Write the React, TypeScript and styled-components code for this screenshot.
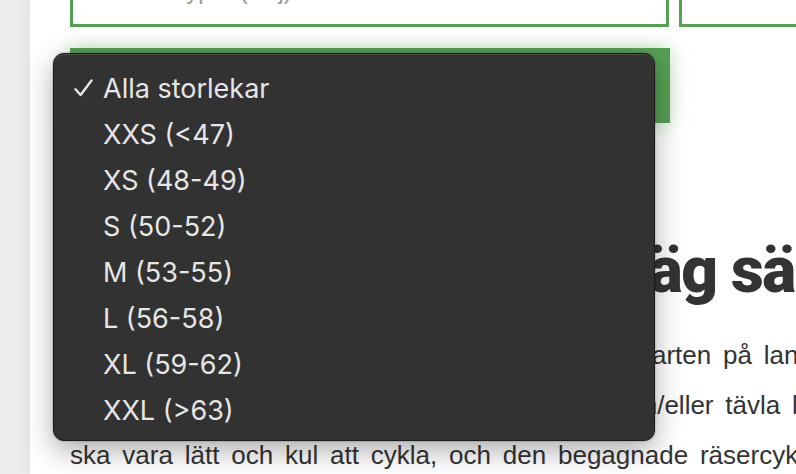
import React from "react";
import styled, { createGlobalStyle } from "styled-components";

const Global = createGlobalStyle`
  html, body { margin: 0; padding: 0; }
  body {
    width: 796px;
    height: 474px;
    overflow: hidden;
    background: #eeeeee;
    font-family: "Liberation Sans", Arial, sans-serif;
  }
`;

const Shell = styled.div`
  display: flex;
  width: 796px;
  height: 474px;
  overflow: hidden;
  position: relative;
`;

const Gutter = styled.div`
  flex: 0 0 30px;
  background: #eeeeee;
`;

const Page = styled.main`
  flex: 1 0 auto;
  background: #ffffff;
  box-shadow: -4px 0 12px rgba(0, 0, 0, 0.06);
  padding-left: 40px;
  overflow: hidden;
`;

const FilterRow = styled.div`
  display: grid;
  grid-template-columns: 599px 600px;
  gap: 10px;
  margin-top: -45px;
`;

const FilterBox = styled.div<{ indent: number }>`
  height: 72px;
  box-sizing: border-box;
  border: 3px solid #55a052;
  background: #fff;
  display: flex;
  align-items: center;
  padding-left: ${(p) => p.indent}px;
  font-size: 24px;
  color: #9a9a9a;
`;

const SearchButton = styled.button`
  display: block;
  width: 600px;
  height: 75px;
  margin-top: 21px;
  border: none;
  background: #55a052;
  color: #fff;
  font-family: "Liberation Sans", Arial, sans-serif;
  font-size: 24px;
  font-weight: 700;
  box-shadow: 0 0 18px rgba(85, 160, 82, 0.35);
`;

const Heading = styled.h2`
  margin: 108px 0 0;
  font-family: Roboto, "Liberation Sans", sans-serif;
  font-weight: 900;
  font-size: 64px;
  letter-spacing: -1.5px;
  line-height: 80px;
  color: #333333;
  white-space: nowrap;
`;

const Paragraph = styled.div`
  margin-top: 19px;
  font-size: 26px;
  line-height: 50px;
  color: #333333;
  word-spacing: 4.6px;
`;

const Line = styled.div`
  white-space: nowrap;
`;

const Menu = styled.ul`
  position: absolute;
  left: 53px;
  top: 53px;
  width: 602px;
  height: 388px;
  box-sizing: border-box;
  margin: 0;
  padding: 11px 0 0;
  list-style: none;
  background: #323232;
  border: 1px solid #1c1c1c;
  border-radius: 11px;
  box-shadow: inset 0 1px 0 #4d4d4d, 0 10px 28px rgba(0, 0, 0, 0.32),
    0 0 2px rgba(0, 0, 0, 0.4);
`;

const Item = styled.li`
  height: 46px;
  display: flex;
  align-items: center;
  font-family: Inter, "Noto Sans", sans-serif;
  font-size: 27px;
  color: #e6e6e6;
`;

const CheckSlot = styled.span`
  flex: 0 0 49px;
  display: flex;
  justify-content: flex-end;
  padding-right: 10px;
  box-sizing: border-box;
`;

const Check = () => (
  <svg width="19" height="18" viewBox="0 0 19 18" fill="none">
    <path
      d="M1.5 10.2 L6.6 16 L17.5 1.5"
      stroke="#e6e6e6"
      strokeWidth="2.4"
      strokeLinecap="round"
      strokeLinejoin="round"
    />
  </svg>
);

const sizes = [
  "Alla storlekar",
  "XXS (<47)",
  "XS (48-49)",
  "S (50-52)",
  "M (53-55)",
  "L (56-58)",
  "XL (59-62)",
  "XXL (>63)",
];

export default function App() {
  return (
    <>
      <Global />
      <Shell>
        <Gutter />
        <Page>
          <FilterRow>
            <FilterBox indent={60}>Alla typer (välj)</FilterBox>
            <FilterBox indent={64}>Pris (kr)</FilterBox>
          </FilterRow>
          <SearchButton>Sök cyklar</SearchButton>
          <Heading>Cykla på min favoritväg säkert</Heading>
          <Paragraph>
            <Line>En begagnad racercykel är ett bra sätt att ge starten på landsvägen</Line>
            <Line>Oavsett om du ska pendla, träna, motionera och/eller tävla lite</Line>
            <Line>ska vara lätt och kul att cykla, och den begagnade räsercykeln</Line>
          </Paragraph>
        </Page>
        <Menu>
          {sizes.map((s, i) => (
            <Item key={s}>
              <CheckSlot>{i === 0 ? <Check /> : null}</CheckSlot>
              {s}
            </Item>
          ))}
        </Menu>
      </Shell>
    </>
  );
}
